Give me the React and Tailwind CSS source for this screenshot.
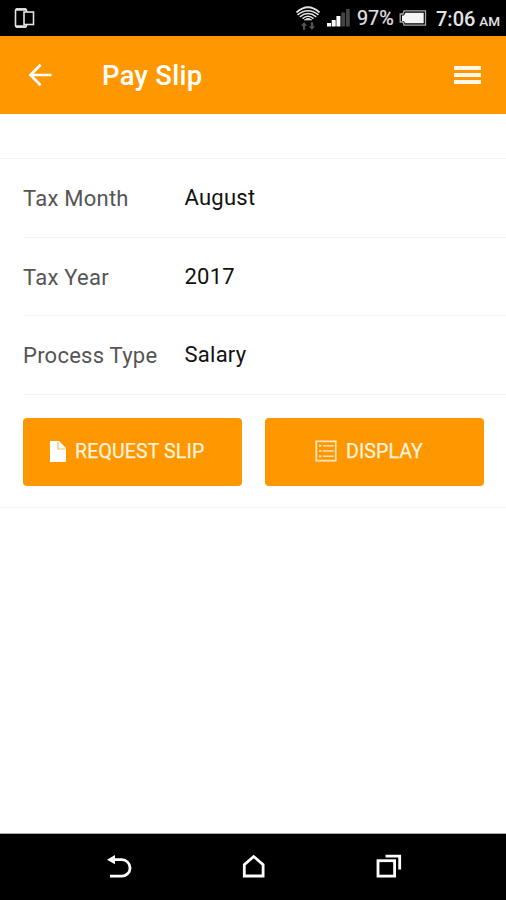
const rows = [
  { label: 'Tax Month', value: 'August' },
  { label: 'Tax Year', value: '2017' },
  { label: 'Process Type', value: 'Salary' },
];

function StatusBar() {
  return (
    <div className="flex h-9 shrink-0 items-center justify-between bg-black pr-[6px] pl-[14px] text-[#e4e4e4]">
      <svg width="21" height="22" viewBox="0 0 21 22" fill="none" stroke="currentColor">
        <rect x="1.5" y="2" width="11" height="18" rx="1.5" strokeWidth="1.6" />
        <path d="M2 2.5h10M2 19.5h10" strokeWidth="2.4" />
        <rect x="10" y="5" width="9.5" height="12.5" fill="#000" strokeWidth="1.6" />
      </svg>

      <div className="flex items-center">
        {/* Wifi */}
        <svg width="26" height="26" viewBox="0 0 26 26" fill="none" stroke="currentColor">
          <path d="M1.5 7.5Q13 -3 24.5 7.5" strokeWidth="1.7" />
          <path d="M2.5 9.8Q13 1.5 23.5 9.8" strokeWidth="1.5" />
          <path d="M4.8 11.8Q13 5.2 21.2 11.8" strokeWidth="1.5" />
          <path d="M7.5 13.6Q13 9 18.5 13.6" strokeWidth="1.5" />
          <path d="M9.5 14.8Q13 12 16.5 14.8Z" fill="currentColor" strokeWidth="1" />
          <path d="M9 17.3l3.2 3.4h-2.1v4H7.9v-4H5.8zM17 24.7l-3.2-3.4h2.1v-4h2.2v4h2.1z" fill="#555" stroke="none" />
        </svg>
        {/* Signal */}
        <svg className="ml-[6px]" width="24" height="20" viewBox="0 0 24 20" fill="currentColor">
          <rect x="0" y="15" width="4" height="3.5" fill="#fff" />
          <rect x="4.7" y="12" width="4" height="6.5" fill="#fff" />
          <rect x="9.4" y="8" width="4" height="10.5" fill="#fff" />
          <rect x="14.3" y="4.5" width="3.8" height="14" fill="#444" />
          <rect x="19" y="1" width="3.8" height="17.5" fill="#444" />
        </svg>
        <span className="mt-[2px] ml-[6px] w-[37px] text-[19.8px] leading-none [-webkit-text-stroke:0.2px]">97%</span>
        {/* Battery */}
        <svg className="ml-[5px]" width="29" height="18" viewBox="0 0 29 18" fill="none">
          <path d="M5 1.8H26.5V16.2H5L4 13H1.2V5H4Z" stroke="#aaa" strokeWidth="1.3" />
          <path d="M6.3 3.8H24.7V14.2H5.8L5 12H3V6.5H5Z" fill="#f5f5f5" />
        </svg>
        <span className="mt-[2px] ml-[8px] flex w-[64px] items-baseline justify-between leading-none">
          <span className="text-[20px] font-medium">7:06</span>
          <span className="text-[13.5px] font-medium">AM</span>
        </span>
      </div>
    </div>
  );
}

function Header() {
  return (
    <header className="flex h-[78px] shrink-0 items-center bg-[#ff9800] pr-[25px] pl-[28px] text-white">
      <svg width="24" height="24" viewBox="0 0 24 24" fill="none" stroke="currentColor" strokeWidth="2.7">
        <path d="M12.6 1.7L2.5 12l10.1 10.3M2.5 12H23.5" />
      </svg>
      <h1 className="mt-[2px] ml-[50px] text-[27.5px] leading-none font-medium tracking-[0.25px]">Pay Slip</h1>
      <div className="ml-auto flex w-[27px] flex-col gap-[3px]">
        <span className="h-1 bg-[#fff6e8]" />
        <span className="h-1 bg-[#fff6e8]" />
        <span className="h-1 bg-[#fff6e8]" />
      </div>
    </header>
  );
}

function NavBar() {
  return (
    <nav className="flex h-[67px] shrink-0 items-center border-t border-[#aaa] bg-black pl-[106px] text-white">
      <svg width="26" height="26" viewBox="0 0 26 26" fill="none" stroke="currentColor" strokeWidth="2.8">
        <path d="M7 5.7H15.8A8.2 8.2 0 0 1 15.8 22.2H4" />
        <path d="M1 5.7L9 1V10.2Z" fill="currentColor" stroke="none" />
      </svg>
      <svg className="ml-[110px]" width="24" height="26" viewBox="0 0 24 26" fill="none" stroke="currentColor" strokeWidth="2.8">
        <path d="M2.3 22V10.7L11.7 2.5L21.1 10.7V22Z" />
      </svg>
      <svg className="ml-[110px]" width="26" height="26" viewBox="0 0 26 26" fill="none" stroke="currentColor" strokeWidth="2.8">
        <rect x="2" y="6.7" width="16.6" height="15.4" />
        <path d="M9.5 2.1H23.7V15.5" />
      </svg>
    </nav>
  );
}

export default function App() {
  return (
    <div className="flex h-[900px] w-[506px] flex-col overflow-hidden bg-white font-['Roboto',sans-serif]">
      <StatusBar />
      <Header />

      <main className="flex-1 pt-[44px]">
        <section className="border-y border-[#f4f4f4]">
          {rows.map((row) => (
            <div key={row.label} className="ml-[23px] flex h-[78.7px] items-center border-b border-[#f4f4f4] pt-[2px] text-[22px] leading-none">
              <span className="w-[161.5px] tracking-[0.25px] text-[#555]">{row.label}</span>
              <span className="-mt-[2px] tracking-[0.25px] text-[#111]">{row.value}</span>
            </div>
          ))}

          <div className="flex h-[112px] gap-[23px] pt-[23px] pr-[22px] pl-[23px]">
            <button className="flex h-[68px] w-[219px] items-center rounded-[4px] bg-[#ff9800] pl-[27px] text-[19.5px] text-[#fff3df]">
              <svg className="-mt-[2px]" width="16" height="21" viewBox="0 0 16 21">
                <path d="M0 0H9L16 7V21H0Z" fill="#fff" />
                <path d="M8 1V8H15.5" fill="none" stroke="#ffb64d" strokeWidth="1.2" />
              </svg>
              <span className="ml-[9px] whitespace-nowrap tracking-[0.15px] [-webkit-text-stroke:0.25px]">REQUEST SLIP</span>
            </button>
            <button className="flex h-[68px] w-[219px] items-center rounded-[4px] bg-[#ff9800] pl-[50px] text-[19.5px] text-[#fff3df]">
              <svg className="-mt-[2px]" width="22" height="22" viewBox="0 0 22 22" fill="none" stroke="#ffe2b5">
                <rect x="1.3" y="1.3" width="19.4" height="19.4" strokeWidth="1.8" />
                <path d="M8 5.8H18.5M8 11H18.5M8 16.2H18.5" strokeWidth="1.4" />
                <path d="M4 5.8H6.5M4 11H6.5M4 16.2H6.5" strokeWidth="2" />
              </svg>
              <span className="ml-[9px] tracking-[0.1px] [-webkit-text-stroke:0.25px]">DISPLAY</span>
            </button>
          </div>
        </section>
      </main>

      <NavBar />
    </div>
  );
}
